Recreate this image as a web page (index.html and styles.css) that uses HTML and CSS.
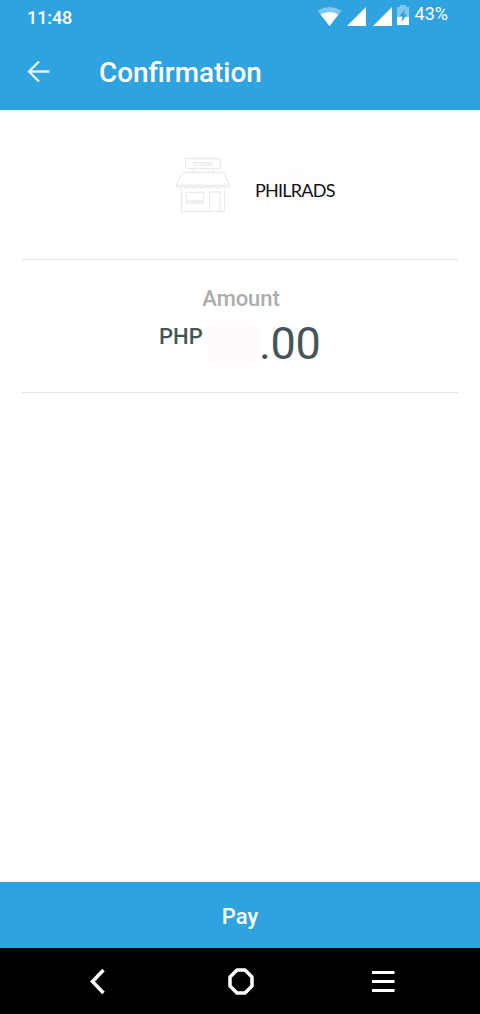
FILE: index.html
```html
<!DOCTYPE html>
<html lang="en">
<head>
<meta charset="utf-8">
<title>Confirmation</title>
<link rel="stylesheet" href="styles.css">
</head>
<body>
<div class="screen">
  <header class="header">
    <div class="status">
      <span class="clock">11:48</span>
      <div class="indicators">
        <svg class="signals" width="94" height="26" viewBox="0 0 94 26">
          <path d="M.5 10.500Q12.500 3.500 24.500 10.500L12.500 26Z" fill="#82c7ed"/>
          <path d="M3.500 14.500Q12.500 9.500 21.500 14.500L12.500 26Z" fill="#fff"/>
          <path d="M30 26L49 7V26ZM56 26L75 7V26Z" fill="#fff"/>
          <path d="M80 7H83V5H89V7H92V17H80Z" fill="#82c7ed"/>
          <path d="M80 17H92V25H80Z" fill="#fff"/>
          <path d="M88 9L82.500 16H85.500L84.500 22L90 14.500H87Z" fill="#2fa2e0"/>
        </svg>
        <span class="percent">43%</span>
      </div>
    </div>
    <div class="titlebar">
      <svg class="back" width="24" height="24" viewBox="0 0 24 24"><path d="M13 1.500L3 11.500L13 21.500M3 11.500H23.500" fill="none" stroke="#e4eef5" stroke-width="2.300"/></svg>
      <h1 class="title">Confirmation</h1>
    </div>
  </header>
  <main class="content">
    <section class="merchant">
      <svg class="store" width="56" height="56" viewBox="0 0 56 56" fill="none" stroke="#ececec" stroke-width="1.300">
        <rect x="10.500" y="1.500" width="35" height="10" rx="1.500"/>
        <path d="M18 12V15M38 12V15M8 15.500H48.500L55 28.500H1Z"/>
        <path d="M1 28.500Q4.500 33 8 29Q12 33 16 29Q20 33 24 29Q28 33 32 29Q36 33 40 29Q44 33 48 29Q52 33 55 28.500M6.500 32V54.500H49.500V32"/>
        <rect x="11.500" y="35.500" width="17" height="10.500"/>
        <path d="M11 44H29M34.500 54V35H45V54"/>
        <text class="store-sign" x="28" y="8.500" text-anchor="middle">STORE</text>
      </svg>
      <span class="merchant-name">PHILRADS</span>
    </section>
    <section class="amount">
      <h2 class="amount-label">Amount</h2>
      <div class="amount-value">
        <span class="currency">PHP</span>
        <span class="redacted"></span>
        <span class="cents">.00</span>
      </div>
    </section>
  </main>
  <button class="pay">Pay</button>
  <nav class="nav">
    <svg width="24" height="28" viewBox="0 0 24 28"><path d="M17.500 3L6.500 14.500L17.500 26" fill="none" stroke="#fff" stroke-width="3.500"/></svg>
    <svg width="28" height="28" viewBox="0 0 28 28"><path d="M10 3H18L25 10V19L18 26H10L3 19V10Z" fill="none" stroke="#fff" stroke-width="3.500" stroke-linejoin="round"/></svg>
    <svg width="24" height="28" viewBox="0 0 24 28"><path d="M1 5.500H23.500M1 14.500H23.500M1 23.500H23.500" stroke="#fff" stroke-width="3"/></svg>
  </nav>
</div>
</body>
</html>
```

FILE: styles.css
```css
* { box-sizing: border-box; }
body { margin: 0; font-family: Roboto, sans-serif; background: #fff; }
.screen { width: 480px; height: 1014px; display: flex; flex-direction: column; }
.header { height: 110px; background: #2fa2e0; color: #fff; }
.status { height: 36px; display: flex; justify-content: space-between; padding: 0 32px 0 27px; }
.clock { font-size: 18px; font-weight: 500; line-height: 36px; letter-spacing: -0.1px; }
.indicators { display: flex; gap: 4px; }
.percent { font-size: 18px; line-height: 28px; }
.titlebar { height: 72px; display: flex; align-items: center; padding-left: 26px; gap: 49px; }
.title { margin: 0; padding-top: 2px; font-size: 27.9px; font-weight: 500; line-height: 34px; }
.content { flex: 1; padding: 0 22px; }
.merchant { height: 150px; display: flex; align-items: center; padding-left: 153px; gap: 24px; border-bottom: 1px solid #e4e4e4; }
.store-sign { font: bold 6px "Liberation Sans", sans-serif; fill: #e8e8e8; stroke: none; }
.merchant-name { font: 18px Lato, sans-serif; letter-spacing: -0.75px; color: #111; padding-top: 10px; background: radial-gradient(ellipse, #fffafa, #fff 70%); }
.amount { height: 133px; padding-top: 26px; border-bottom: 1px solid #e4e4e4; }
.amount-label { margin: 0; padding-left: 2px; text-align: center; font-size: 22px; font-weight: 500; line-height: 26px; letter-spacing: -0.1px; color: #adadad; }
.amount-value { display: flex; padding-left: 137px; color: #455459; }
.currency { width: 48px; font-size: 22px; font-weight: 500; line-height: 50px; }
.redacted { width: 52px; height: 46px; margin-top: 9px; border-radius: 10px; background: #fffafb; }
.cents { font-size: 45px; line-height: 64px; letter-spacing: -0.3px; }
.pay { height: 66px; padding: 4px 0 0; border: 0; background: #2fa2e0; color: #fff; font: 500 22px/26px Roboto, sans-serif; }
.nav { height: 66px; background: #000; display: flex; align-items: center; justify-content: space-between; padding: 0 85px 0 86px; }
```
